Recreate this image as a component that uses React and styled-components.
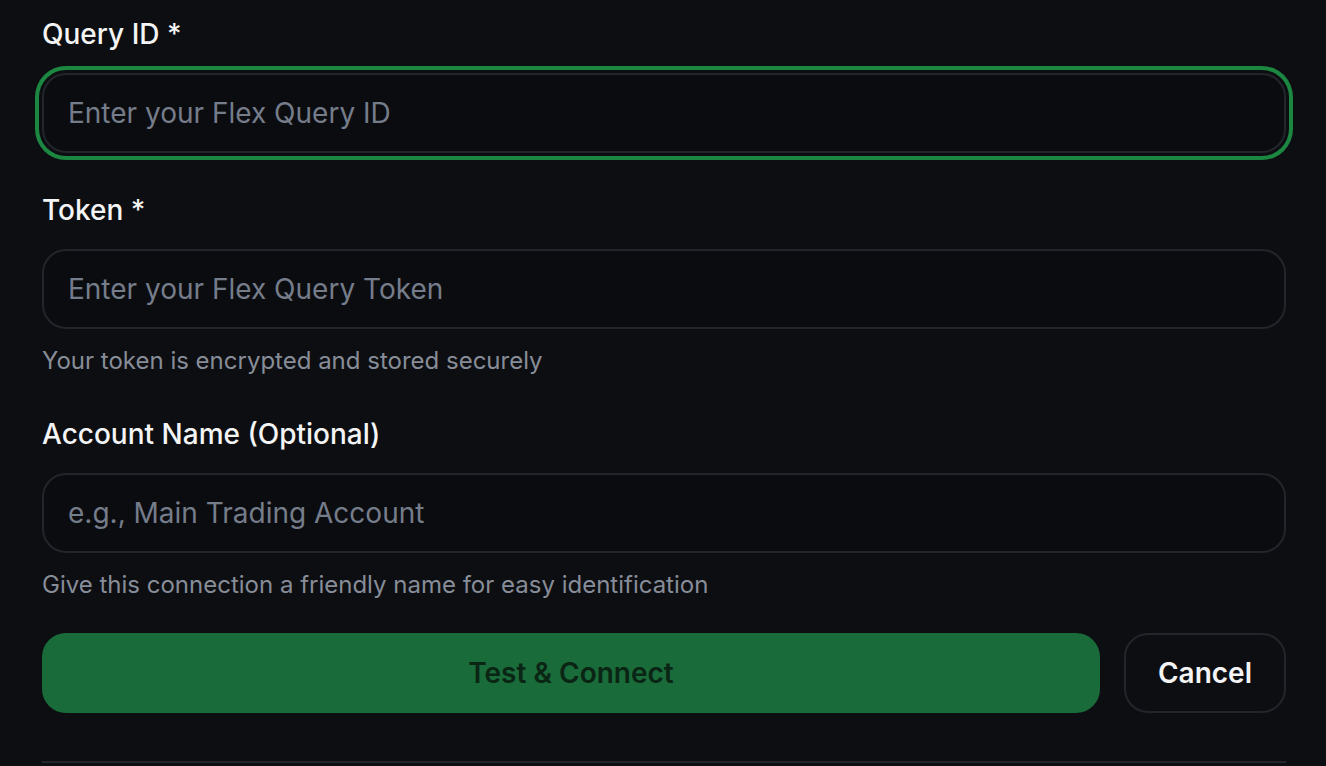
import React from "react";
import styled, { createGlobalStyle, css } from "styled-components";

const GlobalStyle = createGlobalStyle`
  html, body {
    margin: 0;
    padding: 0;
    background: #0d0e12;
  }
  body {
    font-family: Inter, "Noto Sans", "Liberation Sans", sans-serif;
    color: #f4f4f5;
    -webkit-font-smoothing: antialiased;
  }
`;

const Page = styled.div`
  min-height: 766px;
  padding: 14px 40px 0 42px;
  box-sizing: border-box;
  overflow: hidden;
`;

const Form = styled.form`
  display: flex;
  flex-direction: column;
  gap: 37px;
  margin: 0;
`;

const Field = styled.div`
  display: flex;
  flex-direction: column;
`;

const Label = styled.label`
  font-size: 28px;
  line-height: 40px;
  font-weight: 500;
  color: #f4f4f5;
  margin-bottom: 19px;
`;

const Input = styled.input`
  box-sizing: border-box;
  width: 100%;
  height: 80px;
  padding: 0 24px;
  border: 2px solid #22252b;
  border-radius: 24px;
  background: #0b0c10;
  color: #f4f4f5;
  font-family: inherit;
  font-size: 28px;
  caret-color: #ffffff;
  outline: none;

  &::placeholder {
    color: #757c8a;
  }

  ${(p) =>
    p.$active &&
    css`
      box-shadow: 0 0 0 3px #0d0e12, 0 0 0 7px #1b8740;
    `}
`;

const Hint = styled.p`
  margin: 16px 0 0;
  font-size: 24px;
  line-height: 32px;
  color: #878d98;
`;

const Actions = styled.div`
  display: flex;
  gap: 24px;
  margin-top: -5px;
`;

const Button = styled.button`
  box-sizing: border-box;
  height: 80px;
  border-radius: 24px;
  font-family: inherit;
  font-size: 28px;
  font-weight: 600;
  cursor: pointer;

  ${(p) =>
    p.$primary
      ? css`
          flex: 1;
          border: none;
          background: #1a6b3a;
          color: #0b2515;
        `
      : css`
          padding: 0 32px;
          border: 2px solid #22252b;
          background: #0d0e12;
          color: #f4f4f5;
        `}
`;

const Divider = styled.hr`
  margin: 48px 0 0;
  border: none;
  height: 2px;
  background: #22252b;
`;

export default function App() {
  return (
    <>
      <GlobalStyle />
      <Page>
        <Form onSubmit={(e) => e.preventDefault()}>
          <Field>
            <Label htmlFor="queryId">Query ID *</Label>
            <Input id="queryId" $active autoFocus placeholder="Enter your Flex Query ID" />
          </Field>
          <Field>
            <Label htmlFor="token">Token *</Label>
            <Input id="token" placeholder="Enter your Flex Query Token" />
            <Hint>Your token is encrypted and stored securely</Hint>
          </Field>
          <Field>
            <Label htmlFor="accountName">Account Name (Optional)</Label>
            <Input id="accountName" placeholder="e.g., Main Trading Account" />
            <Hint>Give this connection a friendly name for easy identification</Hint>
          </Field>
          <Actions>
            <Button type="submit" $primary>Test &amp; Connect</Button>
            <Button type="button">Cancel</Button>
          </Actions>
        </Form>
        <Divider />
      </Page>
    </>
  );
}
